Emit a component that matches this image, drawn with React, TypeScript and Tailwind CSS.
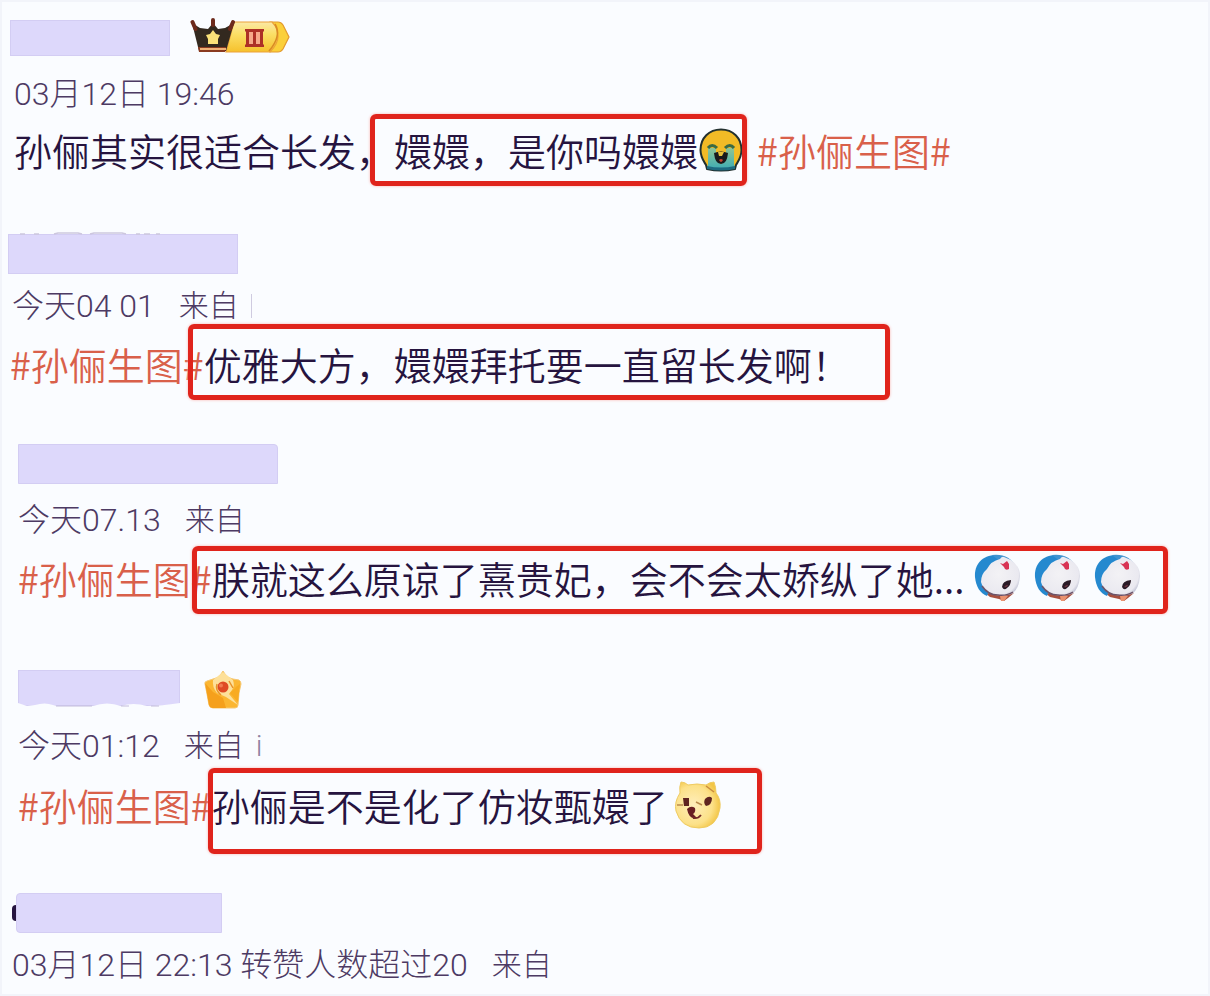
import type { ReactNode } from "react";
import clsx from "clsx";

function VipBadge() {
  return (
    <svg width="102" height="40" viewBox="0 0 102 40" role="img" aria-label="VIP III">
      <defs>
        <linearGradient id="gold" x1="0" y1="0" x2="0" y2="1">
          <stop offset="0" stopColor="#fbe9a6" />
          <stop offset="0.4" stopColor="#fbdf66" />
          <stop offset="1" stopColor="#f6c12c" />
        </linearGradient>
      </defs>
      <path d="M80 4h8q3 0 5 3l6 12-6 12q-2 3-5 3h-8z" fill="#fbd03a" stroke="#e39a2c" strokeWidth="1.2" />
      <path d="M44 4h38q6 6 6 14t-8 16H36z" fill="url(#gold)" stroke="#eba23a" strokeWidth="1.2" />
      <path d="M85 6q7 12-6 27" fill="none" stroke="#d98a25" strokeWidth="1.6" />
      <path d="M2 5l7 28h27l8-28-9 5-7 1-5-6-5 6-8-1z" fill="#33291f" />
      <g stroke="#6d2a1c" strokeWidth="4" strokeLinecap="round">
        <path d="M2.500 4l3 7M23 2v5M43 4l-3 7" />
      </g>
      <path d="M8 29h28l-1 5H9z" fill="#8a3b20" />
      <path d="M10 31h26" stroke="#f0b277" strokeWidth="2" />
      <path d="M23 12l3 4 4 1-2 4v5h-10v-5l-2-4 4-1z" fill="#fbe279" />
      <path d="M55 11h19v2l-1 1v12l1 1v2H55v-2l1-1V14l-1-1z" fill="#ad3026" />
      <path d="M59 14h4v12h-4zM66 14h4v12h-4z" fill="#f6a889" />
    </svg>
  );
}

function CrownBadge() {
  return (
    <svg width="38" height="40" viewBox="0 0 38 40" aria-hidden="true">
      <path
        d="M19 1l4 6 6 2 6 1q2 1 2 4l-2 9-1 12q0 3-3 3H9q-3 0-4-3L3 24 1 14q-1-2 2-3l6-2 6-2z"
        fill="#fbb632"
        stroke="#f6c873"
        strokeWidth="1"
      />
      <path d="M1 13l8 9 10 6 3 10H9q-3 0-4-3L3 24z" fill="#f5a01c" />
      <path d="M9 10l10-8 10 8q2 6-1 10l-3 4 9 11-12-8-9-4q-5-6-4-13z" fill="#fde09a" />
      <path d="M26 23l6-6 4-3-2 18z" fill="#f8ab22" />
      <path d="M13 14q-2 6 4 11M25 11l4 7" stroke="#e8932a" strokeWidth="1.500" fill="none" />
      <circle cx="19" cy="17" r="5.500" fill="#df4a24" />
      <circle cx="17" cy="15.500" r="2" fill="#f07a50" />
    </svg>
  );
}

function CryingEmoji() {
  return (
    <svg className="ml-px" width="44" height="44" viewBox="0 0 44 44" role="img" aria-label="大哭">
      <defs>
        <linearGradient id="tears" x1="0" y1="0" x2="0" y2="1">
          <stop offset="0" stopColor="#8fc596" />
          <stop offset="1" stopColor="#3cacb4" />
        </linearGradient>
      </defs>
      <path
        d="M22 1.500C34 1.500 42.500 10 42.500 22c0 7-2.500 10-5.500 15l-1 4q-14 3-28 0l-1-4C4 32 1.500 29 1.500 22 1.500 10 10 1.500 22 1.500z"
        fill="#f2bb26"
        stroke="#22302f"
        strokeWidth="2"
      />
      <path d="M9 20h8v12l5 4 5-4V20h8v16l1 4q-14 3-28 0l1-4z" fill="url(#tears)" />
      <path d="M8 38q14 3 28 0v3q-14 3-28 0z" fill="#1e6a80" />
      <path d="M9 20q4-5 9 0M26 20q5-5 9 0" stroke="#3a6a44" strokeWidth="3" fill="none" />
      <path d="M15 25q7-3 14 0-1 11-7 11t-7-11z" fill="#191a1c" />
      <path d="M19 24h6l-2 4h-3z" fill="#e8c23c" />
      <path d="M20 32q2-2 4 0-1 2-2 2t-2-2z" fill="#c6432f" />
    </svg>
  );
}

function DoraemonEmoji() {
  return (
    <svg width="46" height="48" viewBox="0 0 46 48" role="img" aria-label="哆啦A梦">
      <defs>
        <radialGradient id="face" cx="0.45" cy="0.45" r="0.6">
          <stop offset="0" stopColor="#f3f2f5" />
          <stop offset="0.85" stopColor="#eae9f0" />
          <stop offset="1" stopColor="#c0c2d4" />
        </radialGradient>
      </defs>
      <path d="M9 37q14 7 31 2l-6 5-4 3-5-2-9-2z" fill="#a84f3e" />
      <path d="M26 42h8l-4 5h-3z" fill="#ea9270" />
      <path d="M22 1C8 1 0 11 1 23c1 10 5 16 12 19L28 6z" fill="#2589cf" />
      <path d="M18 1q17-2 24 12L27 8z" fill="#3f93d0" />
      <path
        d="M26 5q2-3 4-2l7 3Q46 12 46 22q-1 13-8 18-8 3-17 1Q9 38 7 28 7 20 13 15 17 7 26 5z"
        fill="url(#face)"
      />
      <path d="M8 32q6 9 16 9 9 1 15-3" stroke="#6d5368" strokeWidth="1.500" fill="none" />
      <path d="M26 9l3 1 4-3 2 3v5q-4 2-5-2z" fill="#d83354" />
      <path d="M37 26q-9 1-9 7 2 4 5 1 4-3 4-8z" fill="#2a1b26" />
      <path d="M30 33q3-3 4-2-1 3-4 2z" fill="#6b3340" />
    </svg>
  );
}

function DogeEmoji() {
  return (
    <svg className="ml-1.5" width="48" height="50" viewBox="0 0 48 50" role="img" aria-label="doge">
      <defs>
        <radialGradient id="fur" cx="0.4" cy="0.5" r="0.6">
          <stop offset="0" stopColor="#ffeebb" />
          <stop offset="0.7" stopColor="#fce189" />
          <stop offset="1" stopColor="#f3c647" />
        </radialGradient>
      </defs>
      <path
        d="M7 2q4 0 7 3 9-2 18 0 4-3 8-3 2 5 2 11 5 6 4 15-3 20-21 20T2 31q-2-9 4-18-1-6 1-11z"
        fill="url(#fur)"
        stroke="#efcb62"
        strokeWidth="1"
      />
      <path d="M32 6l8 6" stroke="#c98c3f" strokeWidth="1.500" />
      <path d="M9 18h6v8h-5zM31 19q4-4 7-1 0 7-6 8-3-3-1-7z" fill="#5f2420" />
      <path d="M3 25h6M22 22l6 3" stroke="#b98a4c" strokeWidth="1.500" />
      <path d="M13 29q4-4 8-1 1 4-2 6l4 4q-8 2-10-9z" fill="#6a1f22" />
      <path d="M19 38q5 1 8-3" stroke="#742c27" strokeWidth="1.800" fill="none" />
    </svg>
  );
}

function Topic() {
  return (
    <a href="#topic" className="text-[#d9604a]">
      #孙俪生图#
    </a>
  );
}

function Marked({ box, children }: { box: string; children: ReactNode }) {
  return (
    <mark className="relative flex items-center bg-transparent text-inherit">
      {children}
      <span
        className={clsx(
          "pointer-events-none absolute rounded-md border-5 border-[#e0241c] shadow-[0_0_3px_#f9b4ae]",
          box
        )}
      />
    </mark>
  );
}

function Source({ children }: { children?: ReactNode }) {
  return <span className="ml-6 text-[30px]">来自{children}</span>;
}

const bar = "border border-[#d3cdf3] bg-[#ddd8fb]";
const meta =
  "flex items-center whitespace-pre font-['Roboto','Noto_Sans_CJK_SC',sans-serif] text-[32px] leading-10 font-light text-[#4d3a63]";
const body = "flex items-center whitespace-nowrap text-[38px] leading-12 font-[350] text-[#26143f]";

export default function App() {
  return (
    <main className="min-h-screen overflow-hidden border-2 border-[#f2f4fa] bg-[#fafcff] font-['Noto_Sans_CJK_SC',sans-serif]">
      <article className="mt-4 ml-2">
        <header className="flex h-10 items-center gap-5">
          <div className={clsx("h-9 w-40", bar)} />
          <VipBadge />
        </header>
        <div className="ml-1">
          <p className={clsx("mt-4", meta)}>03月12日 19:46</p>
          <p className={clsx("mt-3", body)}>
            孙俪其实很适合长发，
            <Marked box="-left-6 -right-1 -top-3 -bottom-3">
              嬛嬛，是你吗嬛嬛
              <CryingEmoji />
            </Marked>
            <span className="ml-3.5">
              <Topic />
            </span>
          </p>
        </div>
      </article>

      <article className="mt-15 ml-1.5">
        <header className="relative h-10">
          <div className={clsx("h-10 w-[230px]", bar)} />
          <svg className="absolute -top-0.5 left-3" width="140" height="3" viewBox="0 0 140 3" aria-hidden="true">
            <path
              d="M0 2h5M14 2h5M34 2l4-1h20l4 1M70 2l4-1h28l4 1M116 2h4M124 2h6M136 2h4"
              stroke="#cdc7de"
              strokeWidth="1.500"
              fill="none"
            />
          </svg>
        </header>
        <p className={clsx("mt-3 ml-1", meta)}>
          今天04 01
          <Source />
          <span className="ml-3 h-6 w-px bg-[#cfcbe0]" />
        </p>
        <p className={clsx("mt-3.5 ml-0.5", body)}>
          <Topic />
          <Marked box="-left-4 -right-10 -top-4 -bottom-3">优雅大方，嬛嬛拜托要一直留长发啊！</Marked>
        </p>
      </article>

      <article className="mt-14 ml-4">
        <header className="flex h-10">
          <div className={clsx("h-10 w-[260px] rounded-tr-sm", bar)} />
        </header>
        <p className={clsx("mt-4", meta)}>
          今天07.13
          <Source />
        </p>
        <p className={clsx("mt-3.5", body)}>
          <Topic />
          <Marked box="-left-5 -right-7 -top-2 -bottom-3">
            朕就这么原谅了熹贵妃，会不会太娇纵了她...
            <span className="ml-2.5 flex gap-3.5">
              <DoraemonEmoji />
              <DoraemonEmoji />
              <DoraemonEmoji />
            </span>
          </Marked>
        </p>
      </article>

      <article className="mt-17 ml-4">
        <header className="flex h-10 items-start gap-6">
          <div className="relative">
            <div className={clsx("h-9 w-[162px]", bar)} />
            <svg className="absolute -bottom-px left-0" width="162" height="6" viewBox="0 0 162 6" aria-hidden="true">
              <path
                d="M0 6V2l9 3 8-1q10-3 18 0l4 1h36q14-5 28 0 12-4 26 0 14 0 33-3v4z"
                fill="#fafcff"
              />
              <path d="M38 5h36M103 5h8M133 5h8" stroke="#c3bcdc" strokeWidth="1" />
            </svg>
          </div>
          <CrownBadge />
        </header>
        <p className={clsx("mt-4", meta)}>
          今天01:12
          <Source>
            <span className="ml-3 text-[#8f84a3]">i</span>
          </Source>
        </p>
        <p className={clsx("mt-3.5", body)}>
          <Topic />
          <Marked box="-left-1 -right-10 -top-3 -bottom-6">
            孙俪是不是化了仿妆甄嬛了
            <DogeEmoji />
          </Marked>
        </p>
      </article>

      <article className="mt-[63px] ml-2.5">
        <header className="flex h-10 items-center">
          <div className="h-4 w-1 rounded-l-full bg-[#26143f]" />
          <div className={clsx("h-10 w-[206px] rounded-l-sm", bar)} />
        </header>
        <p className={clsx("mt-3", meta)}>
          03月12日 22:13 转赞人数超过20
          <Source />
        </p>
      </article>
    </main>
  );
}
